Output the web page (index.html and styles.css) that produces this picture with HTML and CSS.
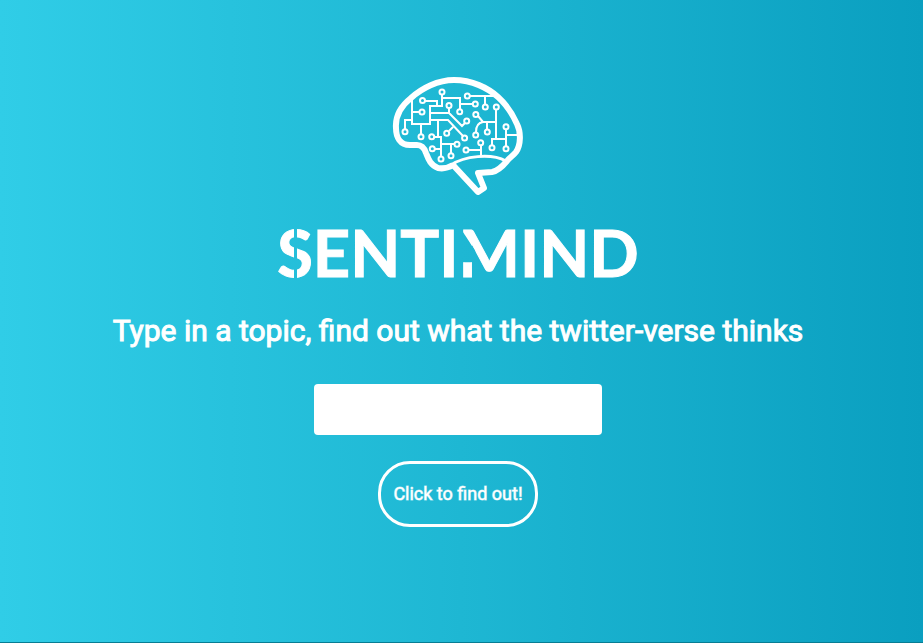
FILE: index.html
```html
<!DOCTYPE html>
<html lang="en">
<head>
<meta charset="utf-8">
<meta name="viewport" content="width=device-width, initial-scale=1">
<title>Sentimind</title>
<link rel="stylesheet" href="styles.css">
</head>
<body>
<main class="hero">
  <svg class="brain" viewBox="385 70 146 130" aria-hidden="true">
    <path class="outline" d="M453 165C448 168 443 169 438 168C430 165 428 158 426 153C424 147 421 145 417 145H410C400 145 396 137 396 128C395 115 401 106 411 98C422 88 438 80 454 80C472 80 488 88 498 97C508 106 513 115 517 124C521 132 521 145 516 152C513 156 510 157 507 161C502 167 498 171 492 172L478 173L484 188L478 192L453 165"/>
    <path class="fold" d="M451 165C464 156 491 153 506 161"/>
    <g class="traces">
      <path d="M425 101H437V106M412 97V124H430V106H442V95M412 112H419M405 129V120H412M421 124V134M442 98H460V109M460 104H473M449 108V113H430M449 113L462 126L465 123M430 120H448L463 136M438 120V137H441V156M434 137H441M441 144H454M435 149H441M451 144V153M449 131L453 127"/>
      <path d="M470 96H497M485 96V104M496 110V139M492 145V139H506M506 130V146M506 135H521M478 116L483 122H496M487 122V129M483 122Q476 123 476 132M469 150H481M481 145V156"/>
    </g>
    <g class="nodes">
      <circle cx="422.5" cy="100.5" r="2.5"/><circle cx="442" cy="92" r="2.5"/><circle cx="422" cy="112" r="2.5"/>
      <circle cx="449" cy="105.5" r="2.5"/><circle cx="405" cy="131.7" r="2.5"/><circle cx="421" cy="136.7" r="2.5"/>
      <circle cx="431.7" cy="136.7" r="2.5"/><circle cx="446.7" cy="133.3" r="2.5"/><circle cx="457" cy="144.3" r="2.5"/>
      <circle cx="432.3" cy="148.8" r="2.5"/><circle cx="441" cy="159" r="2.5"/><circle cx="451" cy="155.7" r="2.5"/>
      <circle cx="467.3" cy="96" r="2.5"/><circle cx="475.3" cy="104" r="2.5"/><circle cx="485.3" cy="107" r="2.5"/>
      <circle cx="496.3" cy="107" r="2.5"/><circle cx="459.7" cy="111.8" r="2.5"/><circle cx="475.8" cy="114.4" r="2.5"/>
      <circle cx="466.7" cy="121" r="2.5"/><circle cx="506" cy="126.7" r="2.5"/><circle cx="487.3" cy="132" r="2.5"/>
      <circle cx="475.7" cy="135" r="2.5"/><circle cx="464.6" cy="138" r="2.5"/><circle cx="466" cy="150" r="2.5"/>
      <circle cx="480.7" cy="142.8" r="2.5"/><circle cx="492" cy="147.8" r="2.5"/><circle cx="506" cy="148.8" r="2.5"/>
    </g>
  </svg>
  <h1 class="wordmark"><span class="cut-s">S</span>ENTI<span class="cut-m">M</span>IND</h1>
  <form class="search">
    <h2 class="tagline"><label for="topic">Type in a topic, find out what the twitter-verse thinks</label></h2>
    <input class="topic" id="topic" type="text">
    <button class="submit" type="button">Click to find out!</button>
  </form>
</main>
</body>
</html>
```
FILE: styles.css
```css
* { box-sizing: border-box; }

body {
  margin: 0;
  min-height: 100vh;
  display: flex;
  font-family: Roboto, sans-serif;
  color: #fff;
  background: linear-gradient(to right, #30cde7, #1eb7d3 50%, #0a9fc0);
  border-bottom: 1px solid #087d93;
}

.hero {
  flex: 1;
  display: flex;
  flex-direction: column;
  align-items: center;
  padding: 70px 7px 40px 0;
}

.brain {
  width: 146px;
  height: 130px;
  fill: none;
  stroke: #fff;
  stroke-linejoin: round;
}
.outline { stroke-width: 6; }
.fold { stroke-width: 3; }
.traces { stroke-width: 2; stroke-linejoin: miter; }
.nodes { stroke-width: 2; fill: #1fb7d4; }

.wordmark {
  margin: 20px 0 0;
  font: 700 65px/64px Lato, sans-serif;
  -webkit-text-stroke: 1px #fff;
}
.cut-s, .cut-m { display: inline-block; }
.cut-s {
  mask: linear-gradient(to right, #000 46%, transparent 46% 56%, #000 56%);
}
.cut-m {
  clip-path: polygon(0 0, 100% 0, 100% 100%, 0 100%, 0 66%, 27% 66%, 27% 48%, 4% 14%);
}

.search {
  display: flex;
  flex-direction: column;
  align-items: center;
}

.tagline {
  margin: 28px 0 0;
  font-size: 30px;
  font-weight: 400;
  line-height: 38px;
  text-align: center;
  -webkit-text-stroke: 1px #fff;
}

.topic {
  width: 288px;
  height: 51px;
  margin-top: 34px;
  padding: 0 12px;
  font: 20px Roboto, sans-serif;
  background: #fff;
  border: 0;
  border-radius: 4px;
}

.submit {
  margin-top: 26px;
  padding: 20px 12px;
  font: 400 18px/20px Roboto, sans-serif;
  color: #fff;
  background: none;
  border: 3px solid #fff;
  border-radius: 32px;
  -webkit-text-stroke: 1px rgba(255, 255, 255, 0.6);
}
```
